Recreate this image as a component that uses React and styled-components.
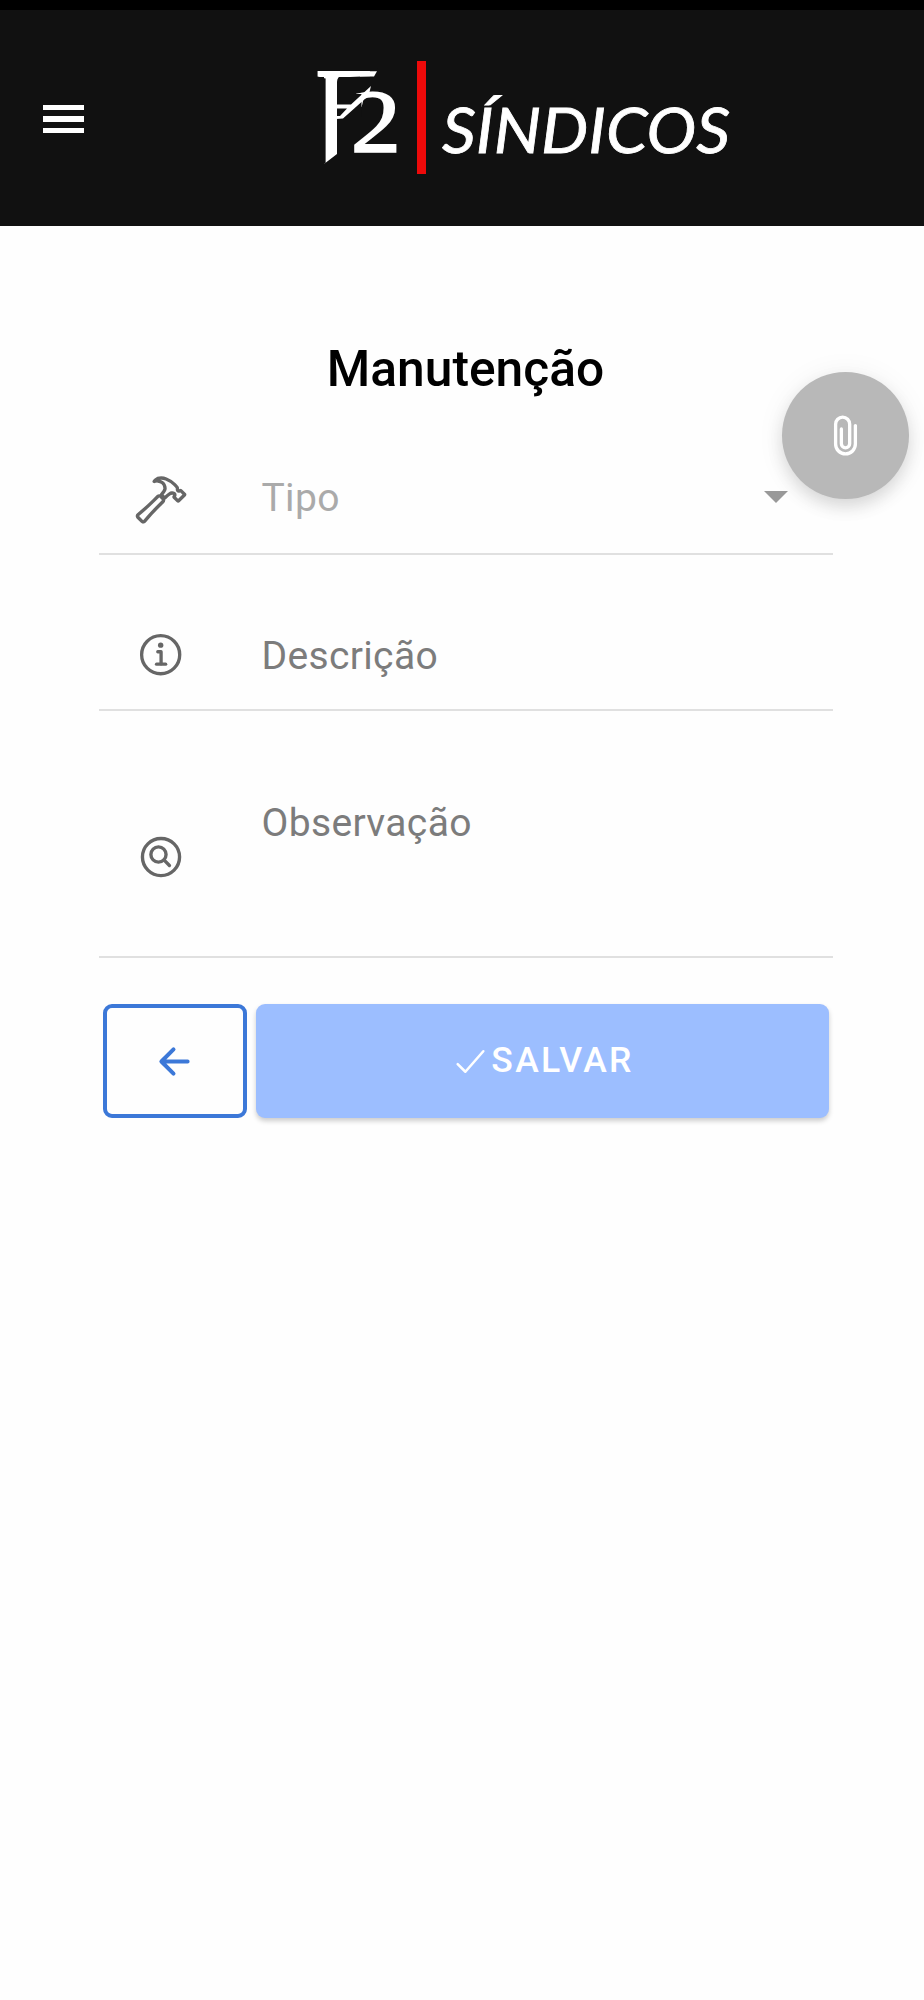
import React from 'react';
import styled, { createGlobalStyle } from 'styled-components';
import {
  IoHammerOutline,
  IoInformationCircleOutline,
  IoSearchCircleOutline,
  IoAttachOutline,
  IoArrowBackOutline,
  IoCheckmarkOutline,
} from 'react-icons/io5';

const GlobalStyle = createGlobalStyle`
  * { box-sizing: border-box; }
  body { margin: 0; background: #fefefe; font-family: Roboto, sans-serif; }
`;

const Screen = styled.div`
  position: relative;
  display: flex;
  flex-direction: column;
  width: 924px;
  height: 2000px;
  background: #fefefe;
  overflow: hidden;
`;

const StatusBar = styled.div`
  height: 10px;
  background: #000;
`;

const Header = styled.header`
  display: flex;
  align-items: center;
  height: 216px;
  padding-left: 43px;
  background: #111;
`;

const MenuButton = styled.button`
  display: flex;
  flex-direction: column;
  gap: 6px;
  width: 41px;
  padding: 2px 0 0;
  border: 0;
  background: none;
`;

const MenuBar = styled.span`
  height: 5.5px;
  background: #fff;
`;

const Logo = styled.svg`
  display: block;
  width: 430px;
  height: 210px;
  margin-left: 226px;
`;

const Content = styled.main`
  display: flex;
  flex-direction: column;
  width: 734px;
  margin-left: 98.5px;
`;

const Title = styled.h1`
  margin: 113px 0 0;
  height: 60px;
  font-size: 49.7px;
  line-height: 60px;
  font-weight: 500;
  text-align: center;
  color: #000;
`;

const Field = styled.label`
  display: flex;
  align-items: ${(p) => (p.$top ? 'flex-start' : 'center')};
  height: ${(p) => p.$height}px;
  padding-top: ${(p) => p.$pad}px;
  border-bottom: 2px solid #e0e0e0;
`;

const FieldIcon = styled.span`
  display: flex;
  justify-content: center;
  width: 125px;
  margin-right: 38px;
  margin-top: ${(p) => p.$drop || 0}px;
  font-size: ${(p) => p.$size}px;
  color: #666;
`;

const FieldText = styled.span`
  flex: 1;
  font-size: 39px;
  line-height: 48px;
  letter-spacing: 0.35px;
  color: ${(p) => (p.$muted ? '#aaa' : '#7c7c7c')};
`;

const Caret = styled.span`
  margin: 0 45px 3px 0;
  border: 12px solid transparent;
  border-top-color: #999;
  border-bottom: 0;
`;

const Actions = styled.div`
  display: flex;
  gap: 9px;
  margin: 46px 4px 0;
`;

const Button = styled.button`
  display: flex;
  align-items: center;
  justify-content: center;
  height: 114px;
  padding: 0;
  border-radius: 9px;
  font-family: inherit;
`;

const BackButton = styled(Button)`
  width: 144px;
  border: 4px solid #3c78d8;
  background: #fefefe;
  color: #3c78d8;
  font-size: 43px;
`;

const SaveButton = styled(Button)`
  flex: 1;
  padding-bottom: 2px;
  border: 0;
  background: #9cbeff;
  color: #fff;
  font-size: 35.5px;
  font-weight: 500;
  letter-spacing: 2.3px;
  box-shadow: 0 3px 5px rgba(0, 0, 0, 0.2);

  svg {
    width: 41px;
    height: 41px;
    margin-top: 3px;
  }
`;

const AttachButton = styled.button`
  position: absolute;
  top: 372px;
  left: 782px;
  display: flex;
  align-items: center;
  justify-content: center;
  width: 127px;
  height: 127px;
  padding: 0;
  border: 0;
  border-radius: 50%;
  background: #b8b8b8;
  color: #fff;
  font-size: 53px;
  box-shadow: 0 8px 16px rgba(0, 0, 0, 0.12), 0 2px 30px rgba(0, 0, 0, 0.06);
`;

function BrandLogo() {
  return (
    <Logo viewBox="310 13 430 210" role="img" aria-label="F2 Síndicos">
      <text transform="translate(316 171) scale(0.63 1)" fontFamily="Liberation Serif, serif" fontWeight="700" fontSize="152" fill="#fff">F</text>
      {/* trims the serifs so the stem ends in a slanted cut */}
      <path d="M312 77H324V164L337 154V77H350L373 76L378 68V182H312Z" fill="#111" />
      <path d="M337 75H342Q337 77 337 82Z" fill="#fff" />
      <path d="M360 71.200H377L374 76.500H360Z" fill="#fff" />
      <text transform="translate(351 150.500) scale(1.13 1)" fontFamily="Liberation Serif, serif" fontSize="88" fill="#fff" stroke="#fff" strokeWidth="2">2</text>
      {/* slash joining the middle bar to the top of the numeral */}
      <path d="M350 94H361.500V117H350Z" fill="#111" />
      <path d="M336 104.500H351L371 86L369.500 92L374 94L366 98L343 118.500L336 119V116H340L347 108.500H336Z" fill="#fff" />
      <rect x="417" y="61" width="9" height="113" fill="#ee0a0a" />
      <text x="442" y="152.500" fontFamily="Lato, sans-serif" fontStyle="italic" fontSize="62" textLength="288" lengthAdjust="spacingAndGlyphs" fill="#fff" stroke="#fff" strokeWidth="0.800">SÍNDICOS</text>
    </Logo>
  );
}

export default function App() {
  return (
    <Screen>
      <GlobalStyle />
      <StatusBar />
      <Header>
        <MenuButton aria-label="Menu">
          <MenuBar />
          <MenuBar />
          <MenuBar />
        </MenuButton>
        <BrandLogo />
      </Header>
      <Content>
        <Title>Manutenção</Title>
        <Field $height={156} $pad={44}>
          <FieldIcon $size={54} $drop={4}><IoHammerOutline /></FieldIcon>
          <FieldText $muted>Tipo</FieldText>
          <Caret />
        </Field>
        <Field $height={156} $pad={47}>
          <FieldIcon $size={53}><IoInformationCircleOutline /></FieldIcon>
          <FieldText>Descrição</FieldText>
        </Field>
        <Field $height={247} $pad={88} $top>
          <FieldIcon $size={54} $drop={31}><IoSearchCircleOutline /></FieldIcon>
          <FieldText>Observação</FieldText>
        </Field>
        <Actions>
          <BackButton aria-label="Voltar"><IoArrowBackOutline /></BackButton>
          <SaveButton><IoCheckmarkOutline />SALVAR</SaveButton>
        </Actions>
      </Content>
      <AttachButton aria-label="Anexar"><IoAttachOutline /></AttachButton>
    </Screen>
  );
}
